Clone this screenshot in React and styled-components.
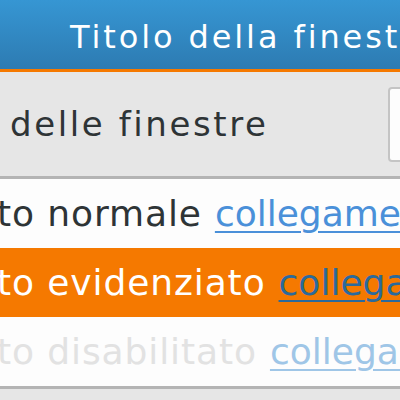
import React from "react";
import styled, { createGlobalStyle } from "styled-components";

const Global = createGlobalStyle`
  html, body {
    margin: 0;
    padding: 0;
    overflow: hidden;
  }
`;

const Window = styled.div`
  width: 400px;
  height: 400px;
  overflow: hidden;
  display: flex;
  flex-direction: column;
  background: #e6e6e6;
  font-family: "DejaVu Sans", sans-serif;
`;

const TitleBar = styled.div`
  flex: 0 0 auto;
  height: 65px;
  box-sizing: content-box;
  padding: 4px 0 0 70px;
  border-bottom: 3px solid #f57900;
  background: linear-gradient(#3696d3, #2d7bb2);
  display: flex;
  align-items: center;
  color: #ffffff;
  font-size: 32px;
  letter-spacing: 2.9px;
  white-space: nowrap;
`;

const Toolbar = styled.div`
  flex: 0 0 auto;
  height: 104px;
  border-bottom: 3px solid #b4b4b4;
  display: flex;
  align-items: center;
  padding-left: 10px;
  white-space: nowrap;
`;

const Label = styled.span`
  flex: 1 1 auto;
  color: #2e3436;
  font-size: 34px;
  letter-spacing: 2.6px;
`;

const Entry = styled.div`
  flex: 0 0 40px;
  height: 71px;
  margin-right: -32px;
  border: 2px solid #c4c4c4;
  border-radius: 4px;
  background: #fdfdfd;
`;

const List = styled.div`
  flex: 0 0 auto;
  border-bottom: 3px solid #b4b4b4;
`;

const Row = styled.div`
  height: 69px;
  display: flex;
  align-items: center;
  white-space: nowrap;
  font-size: 36px;
  background: ${(p) => (p.$selected ? "#f57900" : "#fdfdfd")};
  color: ${(p) =>
    p.$selected ? "#ffffff" : p.$disabled ? "#e2e2e2" : "#2e3436"};
`;

const Plain = styled.span`
  margin-left: -3px;
  margin-right: 13px;
  letter-spacing: 0.9px;
`;

const Link = styled.a`
  color: ${(p) =>
    p.$selected ? "#2b6a9c" : p.$disabled ? "#9fc6e7" : "#4a90d9"};
  text-decoration: underline;
  text-underline-offset: 5px;
  text-decoration-thickness: 2px;
`;

const rows = [
  { text: "to normale", state: "normal" },
  { text: "to evidenziato", state: "selected" },
  { text: "to disabilitato", state: "disabled" },
];

export default function App() {
  return (
    <Window>
      <Global />
      <TitleBar>Titolo della finestra</TitleBar>
      <Toolbar>
        <Label>delle finestre</Label>
        <Entry />
      </Toolbar>
      <List>
        {rows.map((r) => (
          <Row
            key={r.state}
            $selected={r.state === "selected"}
            $disabled={r.state === "disabled"}
          >
            <Plain>{r.text}</Plain>
            <Link
              href="#"
              $selected={r.state === "selected"}
              $disabled={r.state === "disabled"}
            >
              collegamento
            </Link>
          </Row>
        ))}
      </List>
    </Window>
  );
}
